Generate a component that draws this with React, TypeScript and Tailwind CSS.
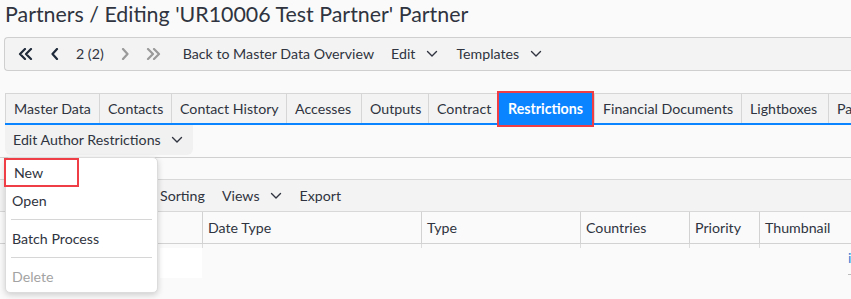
import React from "react";

const ChevDown = ({ className = "" }: { className?: string }) => (
  <svg width="12" height="8" viewBox="0 0 12 8" className={className} fill="none">
    <path d="M1.5 1.5 L6 6 L10.5 1.5" stroke="currentColor" strokeWidth="1.4" strokeLinecap="round" strokeLinejoin="round" />
  </svg>
);

const ChevLeft = ({ color }: { color: string }) => (
  <svg width="8" height="12" viewBox="0 0 8 12" fill="none">
    <path d="M6 1 L1.5 6 L6 11" stroke={color} strokeWidth="2.2" strokeLinecap="round" strokeLinejoin="round" />
  </svg>
);
const ChevRight = ({ color }: { color: string }) => (
  <svg width="8" height="12" viewBox="0 0 8 12" fill="none">
    <path d="M2 1 L6.5 6 L2 11" stroke={color} strokeWidth="2.2" strokeLinecap="round" strokeLinejoin="round" />
  </svg>
);
const DblLeft = ({ color }: { color: string }) => (
  <svg width="15" height="12" viewBox="0 0 15 12" fill="none">
    <path d="M7 1 L2 6 L7 11 M13 1 L8 6 L13 11" stroke={color} strokeWidth="2.2" strokeLinecap="round" strokeLinejoin="round" />
  </svg>
);
const DblRight = ({ color }: { color: string }) => (
  <svg width="15" height="12" viewBox="0 0 15 12" fill="none">
    <path d="M2 1 L7 6 L2 11 M8 1 L13 6 L8 11" stroke={color} strokeWidth="2.2" strokeLinecap="round" strokeLinejoin="round" />
  </svg>
);

const tabs = [
  { t: "Master Data", w: "w-[94px]" },
  { t: "Contacts", w: "w-[72px]" },
  { t: "Contact History", w: "w-[115px]" },
  { t: "Accesses", w: "w-[75px]" },
  { t: "Outputs", w: "w-[67px]" },
  { t: "Contract", w: "w-[69px]" },
  { t: "Restrictions", w: "w-[93px]" },
  { t: "Financial Documents", w: "w-[147px]" },
  { t: "Lightboxes", w: "w-[87px]" },
  { t: "Partner Sites", w: "w-[100px]" },
];

const cols = [
  { label: "", w: "w-[202px]" },
  { label: "Date Type", w: "w-[219px]" },
  { label: "Type", w: "w-[159px]" },
  { label: "Countries", w: "w-[109px]" },
  { label: "Priority", w: "w-[70px]" },
  { label: "Thumbnail", w: "w-[120px]" },
];

export default function App() {
  return (
    <div className="relative w-[851px] h-[299px] overflow-hidden bg-[#fafafa] text-[#2f3440] font-['Lato',sans-serif]">
      {/* Title */}
      <div className="h-[29px] pl-[5px] text-[21.4px] leading-[29px] whitespace-nowrap">
        Partners / Editing 'UR10006 Test Partner' Partner
      </div>

      {/* Toolbar */}
      <div className="mt-[8px] ml-[4px] h-[34px] flex items-center bg-[#f3f3f3] border border-r-0 border-[#cfcfcf] rounded-l-[4px] text-[14.2px] whitespace-nowrap">
        <div className="ml-[13px] flex items-center">
          <DblLeft color="#1f2a3a" />
        </div>
        <div className="ml-[18px] flex items-center">
          <ChevLeft color="#1f2a3a" />
        </div>
        <span className="ml-[17px]">2 (2)</span>
        <div className="ml-[17px] flex items-center">
          <ChevRight color="#9a9a9a" />
        </div>
        <div className="ml-[17px] flex items-center">
          <DblRight color="#9a9a9a" />
        </div>
        <span className="ml-[22px]">Back to Master Data Overview</span>
        <span className="ml-[17px]">Edit</span>
        <ChevDown className="ml-[11px]" />
        <span className="ml-[18px]">Templates</span>
        <ChevDown className="ml-[11px]" />
      </div>

      {/* Tabs */}
      <div className="mt-[22px] ml-[5px] flex h-[30px] text-[14.2px] whitespace-nowrap">
        {tabs.map(({ t, w }) =>
          t === "Restrictions" ? (
            <div
              key={t}
              className={`${w} shrink-0 ml-[2px] mr-[2px] h-[32px] flex items-center justify-center bg-[#0a84ff] text-white font-bold outline-2 outline-[#f03e46] relative z-10`}
            >
              {t}
            </div>
          ) : (
            <div
              key={t}
              className={`${w} shrink-0 h-[30px] pl-[8px] flex items-center bg-[#f3f3f3] border-l border-t border-[#d6d6d6]`}
            >
              {t}
            </div>
          )
        )}
      </div>
      <div className="ml-[5px] h-[2px] bg-[#0a84ff]" />

      {/* Sub action */}
      <div className="ml-[5px] w-[188px] h-[30px] flex items-center bg-[#f1f1f1] rounded-b-[6px] text-[14.2px] whitespace-nowrap">
        <span className="ml-[8px]">Edit Author Restrictions</span>
        <ChevDown className="ml-[10px]" />
      </div>

      {/* Divider and list area */}
      <div className="mt-[2px] border-t border-[#d0d0d0] h-[22px]" />
      <div className="h-[33px] flex items-center bg-[#f3f3f3] border-t border-b border-[#d8d8d8] text-[14.2px] whitespace-nowrap">
        <div className="w-[160px] shrink-0" />
        <span>Sorting</span>
        <span className="ml-[17px]">Views</span>
        <ChevDown className="ml-[10px]" />
        <span className="ml-[18px]">Export</span>
      </div>
      <div className="flex h-[32px] border-b border-[#d2d2d2] text-[14.2px] whitespace-nowrap">
        {cols.map((c, i) => (
          <div
            key={i}
            className={`${c.w} shrink-0 flex items-center pl-[5px] ${i > 0 ? "border-l border-[#d2d2d2]" : ""}`}
          >
            {c.label}
          </div>
        ))}
      </div>
      <div className="flex h-[4px]">
        {cols.map((c, i) => (
          <div key={i} className={`${c.w} shrink-0 ${i > 0 ? "border-l border-[#dcdcdc]" : ""}`} />
        ))}
      </div>
      <div className="flex">
        <div className="w-[160px]" />
        <div className="w-[42px] h-[30px] bg-white" />
        <div className="flex-1" />
        <div className="w-[3px] flex flex-col">
          <span className="text-[14px] leading-[20px] text-[#2a7fd4]">i</span>
          <div className="mt-[6px] h-px w-[3px] bg-[#bbb]" />
        </div>
      </div>

      {/* Dropdown menu */}
      <div className="absolute left-[5px] top-[157px] w-[153px] h-[136px] bg-white border border-[#dcdcdc] rounded-[5px] shadow-[0_2px_6px_rgba(0,0,0,0.18)] text-[14.2px] whitespace-nowrap">
        <div className="h-[28px] flex items-start">
          <div className="-ml-[2px] w-[75px] h-[29px] flex items-center pl-[8px] border-2 border-[#f03e46]">New</div>
        </div>
        <div className="h-[29px] flex items-center pl-[6px]">Open</div>
        <div className="mx-[5px] my-[4px] border-t border-[#d6d6d6]" />
        <div className="h-[29px] flex items-center pl-[6px]">Batch Process</div>
        <div className="mx-[5px] my-[4px] border-t border-[#d6d6d6]" />
        <div className="h-[29px] flex items-center pl-[6px] text-[#a3a3a3]">Delete</div>
      </div>
    </div>
  );
}
